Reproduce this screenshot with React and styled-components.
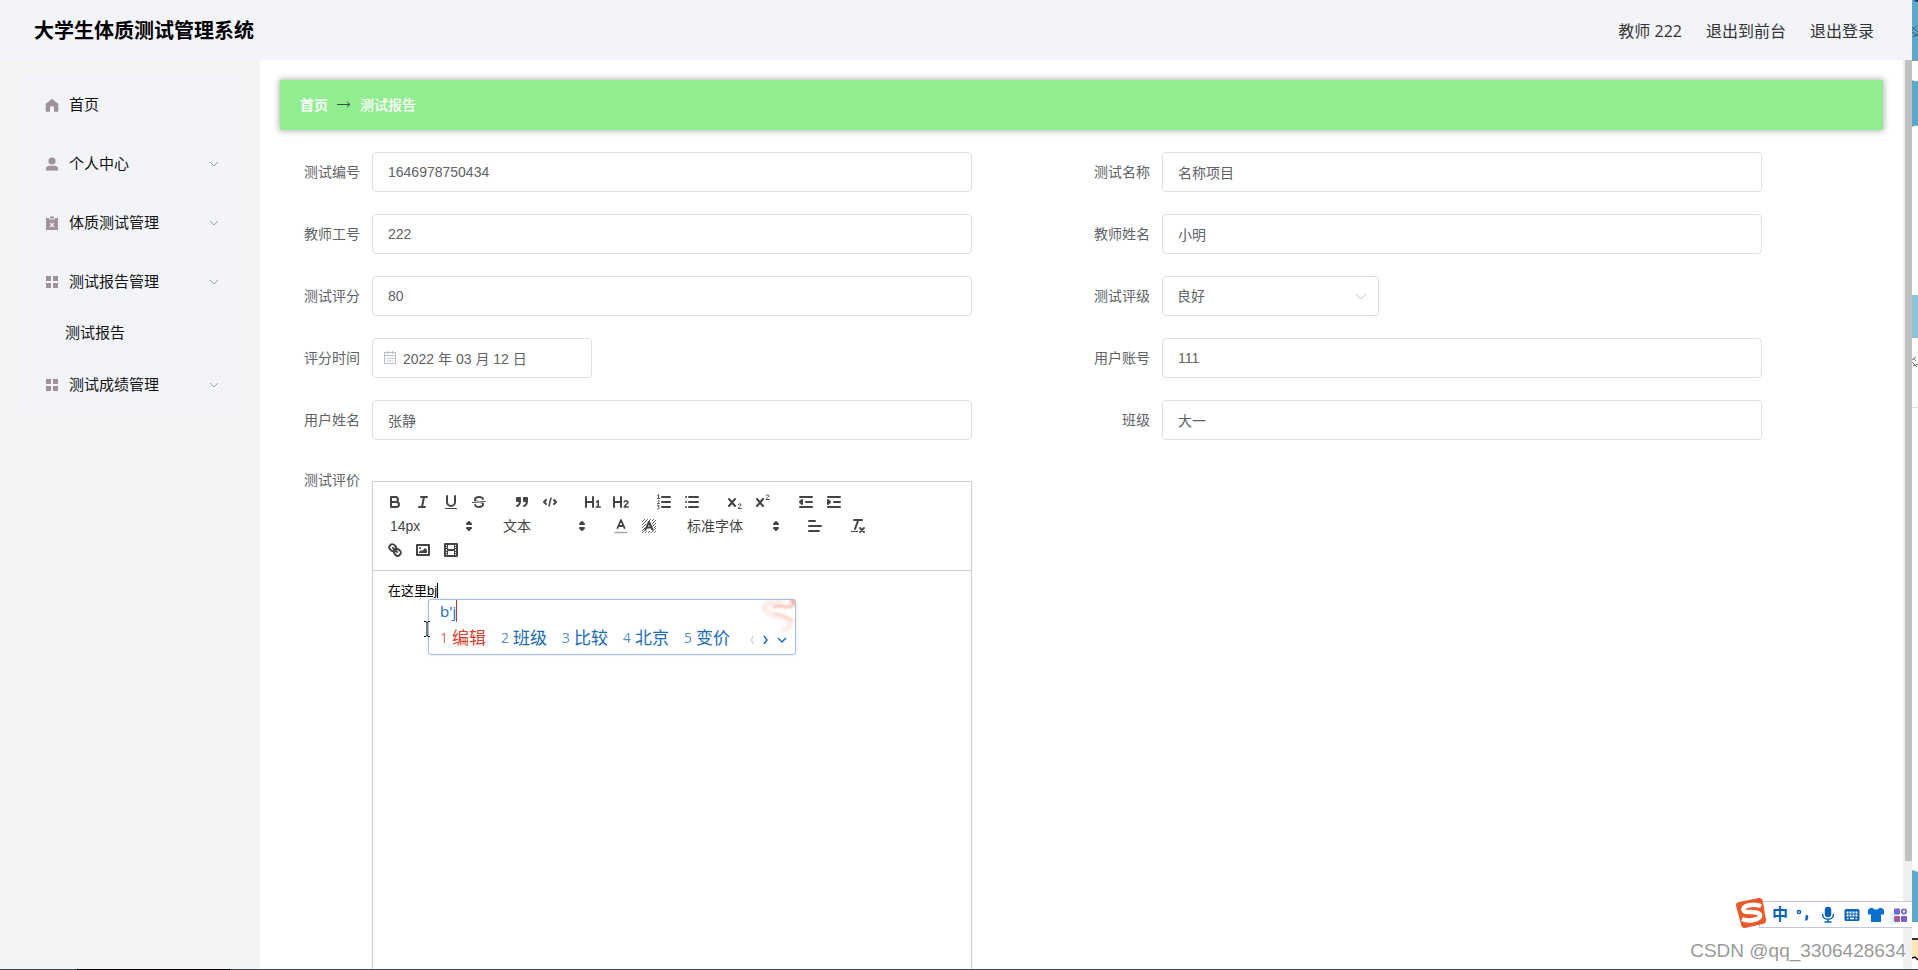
import React, { useState } from "react";
import styled, { createGlobalStyle, css } from "styled-components";

const GlobalStyle = createGlobalStyle`
  * {
    box-sizing: border-box;
  }

  body {
    margin: 0;
    overflow: hidden;
    background: #fff;
    font-family: "Liberation Sans", "Noto Sans CJK SC", sans-serif;
    font-size: 14px;
    color: #606266;
  }

  button, input, select {
    font-family: inherit;
  }
`;

const Page = styled.div`
  position: relative;
  display: flex;
  height: 100vh;
  overflow: hidden;
`;

const Window = styled.div`
  flex: 1;
  min-width: 0;
  display: flex;
  flex-direction: column;
`;

const Header = styled.header`
  display: flex;
  align-items: center;
  justify-content: space-between;
  flex: none;
  height: 60px;
  padding: 2px 38px 0 34px;
  background: #f2f4f9;
`;

const Title = styled.h1`
  margin: 0;
  font-size: 20px;
  font-weight: 700;
  line-height: 30px;
  color: #000;
`;

const UserNav = styled.nav`
  display: flex;
  gap: 24px;
  font-family: "Open Sans", "Noto Sans CJK SC", sans-serif;
  font-size: 16px;
  line-height: 24px;
  color: #333;
`;

const NavLink = styled.a`
  color: inherit;
  text-decoration: none;
`;

const Body = styled.div`
  flex: 1;
  display: flex;
  min-height: 0;
`;

const Sidebar = styled.aside`
  flex: none;
  width: 260px;
  padding: 15px 20px;
  background: #f3f3f3;
`;

const Menu = styled.nav`
  display: flex;
  flex-direction: column;
  background: #f2f4f9;
`;

const MenuItem = styled.button`
  display: flex;
  align-items: center;
  gap: 10px;
  height: 59px;
  padding: 0 21px 0 25px;
  border: none;
  background: none;
  font-size: 15px;
  line-height: 22px;
  color: #111;
  cursor: pointer;

  span {
    flex: 1;
    text-align: left;
  }
`;

const SubItem = styled.a`
  height: 44px;
  padding-left: 45px;
  font-size: 15px;
  line-height: 44px;
  color: #111;
  text-decoration: none;
`;

const Main = styled.main`
  flex: 1;
  min-width: 0;
  padding: 20px;
  overflow: hidden;
  background: #fff;
`;

const Breadcrumb = styled.nav`
  display: flex;
  align-items: center;
  gap: 9px;
  height: 50px;
  padding: 0 20px;
  border-radius: 1px;
  background: #90ee90;
  box-shadow: 0 0 6px 1px rgba(0, 0, 0, 0.3);
  color: #fff;
  line-height: 20px;
`;

const Crumb = styled.a`
  color: #fff;
  font-weight: ${(props) => (props.$strong ? 700 : 500)};
  text-decoration: none;
`;

const Form = styled.form`
  padding: 22px 11px 0 12px;
`;

const Fields = styled.div`
  display: grid;
  grid-template-columns: 1fr 1fr;
  row-gap: 22px;
`;

const Field = styled.div`
  display: flex;
  gap: 12px;
  padding-right: 110px;
`;

const Label = styled.label`
  flex: none;
  width: 68px;
  line-height: 40px;
  text-align: right;
`;

const control = css`
  width: 100%;
  height: 40px;
  padding: 0 15px;
  border: 1px solid #dcdfe6;
  border-radius: 4px;
  background: #fff;
  font-size: 14px;
  color: #606266;
  outline: none;
`;

const Input = styled.input`
  ${control}
  padding-left: ${(props) => (props.$icon ? "30px" : "15px")};
`;

const Select = styled.select`
  ${control}
  padding-left: 14px;
  appearance: none;
`;

const ControlBox = styled.div`
  position: relative;
  width: ${(props) => props.$width};

  svg {
    position: absolute;
    top: 13px;
    ${(props) => (props.$side === "left" ? "left: 11px;" : "right: 11px;")}
    pointer-events: none;
  }
`;

const EditorField = styled.div`
  display: flex;
  gap: 12px;
  width: 50%;
  margin-top: 20px;
  padding-right: 110px;
`;

const Editor = styled.div`
  flex: 1;
  min-width: 0;
  margin-top: 21px;
  border: 1px solid #ccc;
`;

const Toolbar = styled.div`
  display: flex;
  flex-wrap: wrap;
  padding: 8px;
  border-bottom: 1px solid #ccc;
`;

const Formats = styled.div`
  display: flex;
  margin-right: 15px;
`;

const ToolButton = styled.button`
  width: 28px;
  height: 24px;
  padding: 3px 5px;
  border: none;
  background: none;
  cursor: pointer;

  svg {
    display: block;
  }
`;

const Picker = styled.div`
  position: relative;
  width: ${(props) => props.$width};
  height: 24px;

  select {
    width: 100%;
    height: 24px;
    padding: 0 18px 0 9px;
    border: none;
    appearance: none;
    background: none;
    font-size: 14px;
    color: #444;
    outline: none;
  }

  svg {
    position: absolute;
    top: 3px;
    right: 1px;
    pointer-events: none;
  }
`;

const EditorBody = styled.div`
  position: relative;
  height: 600px;
`;

const EditorText = styled.div`
  height: 100%;
  padding: 11px 15px;
  font-size: 13px;
  line-height: 18px;
  color: #000;
  outline: none;

  u {
    border-right: 1px solid #000;
  }
`;

const Candidates = styled.div`
  position: absolute;
  top: 28px;
  left: 55px;
  width: 368px;
  height: 56px;
  padding: 0 7px 0 11px;
  border: 1px solid #a9bfdf;
  border-radius: 3px;
  background: #fff;
  box-shadow: 0 0 2px rgba(120, 150, 200, 0.4);
  font-family: "Open Sans", "Noto Sans CJK SC", sans-serif;
  color: #1a6bb5;
`;

const Typed = styled.div`
  width: max-content;
  border-right: 1px solid #c33;
  font-size: 15px;
  line-height: 22px;
`;

const CandidateRow = styled.div`
  position: relative;
  display: flex;
  align-items: center;
  height: 32px;
`;

const Candidate = styled.div`
  display: flex;
  align-items: center;
  gap: 4px;
  width: 61px;
  font-size: 17px;
  line-height: 24px;
  color: ${(props) => (props.$active ? "#d8402a" : "#1a6bb5")};

  small {
    width: 8px;
    font-size: 14px;
    opacity: 0.75;
  }
`;

const Swirl = styled.svg`
  position: absolute;
  top: 0;
  right: 0;
`;

const IBeam = styled.svg`
  position: absolute;
  top: 49px;
  left: 50px;
`;

const ScrollTrack = styled.div`
  flex: none;
  width: 9px;
  padding-left: 2px;
  background: #f0f0f0;
`;

const ScrollThumb = styled.div`
  height: 88%;
  background: #c1c1c1;
`;

const Behind = styled.div`
  flex: none;
  width: 6px;
  overflow: hidden;

  svg {
    display: block;
  }
`;

const ImeBar = styled.div`
  position: absolute;
  right: 6px;
  bottom: 42px;
  display: flex;
  align-items: center;
  gap: 4px;
  height: 27px;
  padding: 0 2px 0 10px;
  border: 1px solid #c3c5dc;
  border-right: none;
  background: #fff;
`;

const ImeButton = styled.button`
  width: 20px;
  height: 20px;
  padding: 0;
  border: none;
  background: none;
  font-size: 16px;
  font-weight: 700;
  line-height: 20px;
  color: #0a62b8;

  svg {
    display: block;
  }
`;

const ImeLogo = styled.svg`
  position: absolute;
  left: -25px;
  top: -5px;
`;

const Watermark = styled.div`
  position: absolute;
  right: 12px;
  bottom: 8px;
  font-size: 19px;
  line-height: 22px;
  color: #999;
  text-shadow: 1px 1px 0 #fff;
`;

const Taskbar = styled.div`
  position: absolute;
  left: 0;
  right: 0;
  bottom: 0;
  height: 1px;
  background: linear-gradient(to right, #3d4a52 4%, #000 4%, #000 12%, #3d4a52 12%);
`;

const SideIcon = ({ children }) => (
  <svg width="14" height="14" viewBox="0 0 14 14" fill="#9f9299">
    {children}
  </svg>
);

const HomeIcon = () => (
  <SideIcon>
    <path d="M7 .8 13.300 6v7.200a.6.6 0 0 1-.6.6H9V10a2 2 0 0 0-4 0v3.800H1.300a.6.6 0 0 1-.6-.6V6Z" />
  </SideIcon>
);

const UserIcon = () => (
  <SideIcon>
    <circle cx="7" cy="4" r="3.6" />
    <path d="M1 13.500V12c0-2 1.500-3.200 3.500-3.200h5c2 0 3.500 1.200 3.500 3.200v1.500Z" />
  </SideIcon>
);

const ClipboardIcon = () => (
  <SideIcon>
    <path d="M1 2h3v1.500h6V2h3v12H1Z" />
    <path d="M5 .5h4v2H5Z" />
    <path d="m5 6.800 4 4.200M9 6.800 5 11" stroke="#f2f4f9" strokeWidth="1.200" />
  </SideIcon>
);

const GridIcon = () => (
  <SideIcon>
    <path d="M1 1h5v5H1ZM8 1h5v5H8ZM1 8h5v5H1ZM8 8h5v5H8Z" />
  </SideIcon>
);

const Chevron = ({ size = 10, color = "#909399" }) => (
  <svg width={size} height={size} viewBox="0 0 10 10" fill="none" stroke={color} strokeWidth="0.9">
    <path d="m1 3 4 4 4-4" />
  </svg>
);

const SelectArrow = () => (
  <svg width="14" height="14" viewBox="0 0 14 14" fill="none" stroke="#c0c4cc">
    <path d="m2 5 5 5 5-5" />
  </svg>
);

const CalendarIcon = () => (
  <svg width="14" height="14" viewBox="0 0 14 14" fill="none" stroke="#b9bdc5">
    <path d="M1.500 1.500h11v11h-11ZM1.500 4.500h11M4.500 0v3M9.500 0v3M3.500 7.500h2M6 7.500h2M8.500 7.500h2M3.500 10h2M6 10h2M8.500 10h2" />
  </svg>
);

const QIcon = ({ children }) => (
  <svg
    width="18"
    height="18"
    viewBox="0 0 18 18"
    fill="none"
    stroke="#444"
    strokeWidth="2"
    strokeLinecap="round"
    strokeLinejoin="round"
  >
    {children}
  </svg>
);

const FILL = { fill: "#444", stroke: "none" };

const icons = {
  bold: <path d="M5 4h4.500a2.500 2.500 0 0 1 0 5H5ZM5 9h5.500a2.500 2.500 0 0 1 0 5H5Z" />,
  italic: <path d="M7 4h6M5 14h6M8 14l2-10" />,
  underline: (
    <>
      <path d="M5 3v6a4 4 0 0 0 8 0V3" />
      <rect x="3" y="15" width="12" height="1" {...FILL} />
    </>
  ),
  strike: (
    <>
      <path d="M15.500 8.500l-13 1" strokeWidth="1" />
      <path
        {...FILL}
        d="M9.007,8C6.542,7.791,6,7.519,6,6.500,6,5.792,7.283,5,9,5c1.571,0,2.765.679,2.969,1.309a1,1,0,0,0,1.900-.617C13.356,4.106,11.354,3,9,3,6.200,3,4,4.538,4,6.500a3.200,3.200,0,0,0,.5,1.843Z"
      />
      <path
        {...FILL}
        d="M8.984,10C11.457,10.208,12,10.479,12,11.500c0,0.708-1.283,1.500-3,1.500-1.571,0-2.765-.679-2.969-1.309a1,1,0,1,0-1.900.617C4.644,13.894,6.646,15,9,15c2.800,0,5-1.538,5-3.500a3.200,3.200,0,0,0-.5-1.843Z"
      />
    </>
  ),
  quote: (
    <>
      <path fill="#444" d="M4 5h3v3H4ZM11 5h3v3h-3Z" />
      <path d="M7 8c0 4-3 5-3 5M14 8c0 4-3 5-3 5" />
    </>
  ),
  code: (
    <>
      <path d="M5 7 3 9l2 2M13 7l2 2-2 2" />
      <path d="M10 5 8 13" strokeWidth="1.500" />
    </>
  ),
  h1: (
    <>
      <path d="M2 4v10M9 4v10M2 9h7" />
      <path d="m12.500 8.800 1.700-1.100V14M12.300 14h4" strokeWidth="1.600" />
    </>
  ),
  h2: (
    <>
      <path d="M2 4v10M9 4v10M2 9h7" />
      <path d="M12.300 8.800c.3-1.500 3.700-1.500 3.700.4 0 1.800-3.500 2.600-3.700 4.800h4" strokeWidth="1.600" />
    </>
  ),
  ordered: (
    <>
      <path d="M7 4h8M7 9h8M7 14h8" />
      <path
        strokeWidth="0.9"
        d="m2.500 2.500 1-.9v3.500M2.500 5.500h2M2.500 8c.6-1 2-.4 1.700.6-.2.900-1.700 1.200-1.700 2.100h2M2.500 12.700h1.700l-.9 1.300c1.500 0 1.500 2.200-.8 2"
      />
    </>
  ),
  bullet: <path d="M6 4h9M6 9h9M6 14h9M3 4h0M3 9h0M3 14h0" />,
  sub: (
    <>
      <path d="m3 6 6 7M9 6l-6 7" />
      <path strokeWidth="1" d="M12.300 11.700c.3-1.400 2.700-1.200 2.600.3-.1 1.300-2.600 2-2.700 3.500h3" />
    </>
  ),
  sup: (
    <>
      <path d="m3 6 6 7M9 6l-6 7" />
      <path strokeWidth="1" d="M12.300 2.700c.3-1.400 2.700-1.200 2.600.3-.1 1.300-2.600 2-2.700 3.500h3" />
    </>
  ),
  outdent: <path fill="#444" d="M3 14h12M3 4h12M9 9h6M5 7v4L3 9Z" />,
  indent: <path fill="#444" d="M3 14h12M3 4h12M9 9h6M3 7v4l2-2Z" />,
  color: (
    <>
      <path d="M3 15.500h12" stroke="#aaa" strokeWidth="1.500" />
      <path d="M5.500 11 9 3l3.500 8M6.400 9h5.200" strokeWidth="1.800" />
    </>
  ),
  background: (
    <>
      <path
        strokeWidth="0.8"
        strokeLinecap="butt"
        d="M2 5l3-3M2 8l6-6M2 11l4-4M9 4l2-2M2 14l3-3M12 4l2-2M2 16l3-3M12 7l4-4M5 16l2-2M13 9l3-3M8 16l2-2M14 11l2-2M11 16l5-5M14 16l2-2"
      />
      <path d="M5.500 12.500 9 5l3.500 7.500M6.400 10.500h5.200" />
    </>
  ),
  align: <path d="M3 9h12M3 14h10M3 4h6" />,
  clean: (
    <>
      <path d="M5 3h8M6 12l3.300-9" />
      <path d="m11 11 4 4M15 11l-4 4" strokeWidth="1.800" />
      <rect x="2" y="14" width="7" height="1" {...FILL} />
    </>
  ),
  link: (
    <>
      <path d="m7 7 4 4" />
      <path d="M8.900,4.577a3.476,3.476,0,0,1,.36,4.679A3.476,3.476,0,0,1,4.577,8.900C3.185,7.500,2.035,6.400,4.217,4.217S7.500,3.185,8.900,4.577Z" />
      <path d="M13.423,9.100a3.476,3.476,0,0,0-4.679-.36,3.476,3.476,0,0,0,.36,4.679c1.392,1.392,2.500,2.542,4.679.36S14.815,10.500,13.423,9.100Z" />
    </>
  ),
  image: (
    <>
      <rect x="3" y="4" width="12" height="10" />
      <circle cx="6" cy="7" r="1" {...FILL} />
      <path {...FILL} d="M5 12v-1l2-2 1 1 3-3 2 2v3Z" />
    </>
  ),
  video: (
    <>
      <rect x="3" y="3" width="12" height="12" />
      <path {...FILL} d="M5 3h1v12H5ZM12 3h1v12h-1ZM5 8h8v2H5ZM3 5h3v1H3ZM3 7h3v1H3ZM3 10h3v1H3ZM3 12h3v1H3ZM12 5h3v1h-3ZM12 7h3v1h-3ZM12 10h3v1h-3ZM12 12h3v1h-3Z" />
    </>
  ),
};

const Tool = ({ name }) => (
  <ToolButton type="button" aria-label={name}>
    <QIcon>{icons[name]}</QIcon>
  </ToolButton>
);

const ToolPicker = ({ name, value, width }) => (
  <Picker $width={width}>
    <select aria-label={name} defaultValue={value}>
      <option>{value}</option>
    </select>
    <QIcon>
      <path fill="#444" d="m7 11 2 2 2-2ZM7 7l2-2 2 2Z" />
    </QIcon>
  </Picker>
);

const menuItems = [
  { label: "首页", icon: <HomeIcon /> },
  { label: "个人中心", icon: <UserIcon />, children: [] },
  { label: "体质测试管理", icon: <ClipboardIcon />, children: [] },
  { label: "测试报告管理", icon: <GridIcon />, children: ["测试报告"] },
  { label: "测试成绩管理", icon: <GridIcon />, children: [] },
];

const fields = [
  { name: "ceshibianhao", label: "测试编号" },
  { name: "ceshimingcheng", label: "测试名称" },
  { name: "jiaoshigonghao", label: "教师工号" },
  { name: "jiaoshixingming", label: "教师姓名" },
  { name: "ceshipingfen", label: "测试评分" },
  { name: "ceshipingji", label: "测试评级", type: "select", options: ["良好"] },
  { name: "pingfenshijian", label: "评分时间", type: "date" },
  { name: "yonghuzhanghao", label: "用户账号" },
  { name: "yonghuxingming", label: "用户姓名" },
  { name: "banji", label: "班级" },
];

const candidates = ["编辑", "班级", "比较", "北京", "变价"];

function FieldControl({ field, value, onChange }) {
  if (field.type === "select") {
    return (
      <ControlBox $width="217px">
        <Select id={field.name} name={field.name} value={value} onChange={onChange}>
          {field.options.map((option) => (
            <option key={option}>{option}</option>
          ))}
        </Select>
        <SelectArrow />
      </ControlBox>
    );
  }
  if (field.type === "date") {
    return (
      <ControlBox $width="220px" $side="left">
        <Input $icon id={field.name} name={field.name} value={value} onChange={onChange} />
        <CalendarIcon />
      </ControlBox>
    );
  }
  return <Input id={field.name} name={field.name} value={value} onChange={onChange} />;
}

function RichEditor() {
  return (
    <Editor>
      <Toolbar>
        <Formats>
          <Tool name="bold" />
          <Tool name="italic" />
          <Tool name="underline" />
          <Tool name="strike" />
        </Formats>
        <Formats>
          <Tool name="quote" />
          <Tool name="code" />
        </Formats>
        <Formats>
          <Tool name="h1" />
          <Tool name="h2" />
        </Formats>
        <Formats>
          <Tool name="ordered" />
          <Tool name="bullet" />
        </Formats>
        <Formats>
          <Tool name="sub" />
          <Tool name="sup" />
        </Formats>
        <Formats>
          <Tool name="outdent" />
          <Tool name="indent" />
        </Formats>
        <Formats>
          <ToolPicker name="size" value="14px" width="98px" />
        </Formats>
        <Formats>
          <ToolPicker name="header" value="文本" width="98px" />
        </Formats>
        <Formats>
          <Tool name="color" />
          <Tool name="background" />
        </Formats>
        <Formats>
          <ToolPicker name="font" value="标准字体" width="108px" />
        </Formats>
        <Formats>
          <Tool name="align" />
        </Formats>
        <Formats>
          <Tool name="clean" />
        </Formats>
        <Formats>
          <Tool name="link" />
          <Tool name="image" />
          <Tool name="video" />
        </Formats>
      </Toolbar>
      <EditorBody>
        <EditorText
          role="textbox"
          aria-labelledby="pingjia-label"
          contentEditable
          suppressContentEditableWarning
          spellCheck={false}
        >
          在这里<u>bj</u>
        </EditorText>
        <Candidates>
          <Swirl width="38" height="32" viewBox="0 0 38 32" fill="none">
            <defs>
              <filter id="soft">
                <feGaussianBlur stdDeviation="1.2" />
              </filter>
            </defs>
            <g filter="url(#soft)">
              <path d="M26 3C14 0 4 5 9 11s20 4 24 10-4 8-8 9" stroke="#fdeeea" strokeWidth="6" />
              <path d="M16 7c6-2 12 1 20-1" stroke="#f9c4b8" strokeWidth="3" />
              <path d="M18 14c7 1 13 3 18 7" stroke="#fbd5cc" strokeWidth="3" />
              <path d="M31 0h7v8q-2-5-7-8Z" fill="#f2a08f" />
            </g>
          </Swirl>
          <Typed>b'j</Typed>
          <CandidateRow>
            {candidates.map((word, index) => (
              <Candidate key={word} $active={index === 0}>
                <small>{index + 1}</small>
                {word}
              </Candidate>
            ))}
            <svg width="42" height="12" viewBox="0 0 42 12" fill="none" stroke="#1a6bb5" strokeWidth="1.500">
              <path d="M9 4 6 8l3 4" stroke="#d5dbe4" />
              <path d="m19 4 3 4-3 4" />
              <path d="m33 6 4 4 4-4" />
            </svg>
          </CandidateRow>
        </Candidates>
        <IBeam width="8" height="18" viewBox="0 0 8 18" fill="none" stroke="#000">
          <path d="M1 1.500h2l1 1 1-1h2M4 2v14M1 16.500h2l1-1 1 1h2" />
        </IBeam>
      </EditorBody>
    </Editor>
  );
}

function InputMethodBar() {
  return (
    <ImeBar>
      <ImeLogo width="32" height="32" viewBox="0 0 32 32">
        <path d="M4 5 24 1q3-.3 3.700 2.500L31 23q.3 3-2.500 3.700L10 31q-3 .3-3.700-2.500L1 8.500Q.8 5.600 4 5Z" fill="#e95a2b" />
        <path
          d="M26 9C18 6 7.500 8.500 8.500 13c1 4 15 0 16.500 5 1 5-12 7-18 4"
          fill="none"
          stroke="#fff"
          strokeWidth="4.500"
        />
      </ImeLogo>
      <ImeButton type="button">中</ImeButton>
      <ImeButton type="button" aria-label="标点">
        <svg width="20" height="20" viewBox="0 0 20 20" fill="none" stroke="#0a62b8">
          <circle cx="5" cy="7" r="1.600" strokeWidth="1.500" />
          <path d="M11.500 11.500H13c.3 2-.5 3-1.700 3.500" strokeWidth="2.400" />
        </svg>
      </ImeButton>
      <ImeButton type="button" aria-label="语音">
        <svg width="20" height="20" viewBox="0 0 20 20" fill="none" stroke="#0a62b8" strokeWidth="1.500">
          <rect x="7.500" y="2.500" width="5" height="9" rx="2.500" fill="#0a62b8" />
          <path d="M4.500 9c0 7 11 7 11 0M10 14v3M6.500 17h7" />
        </svg>
      </ImeButton>
      <ImeButton type="button" aria-label="键盘">
        <svg width="20" height="20" viewBox="0 0 20 20">
          <rect x="2.500" y="4" width="15" height="12" rx="1.500" fill="#0a62b8" />
          <path
            d="M4.500 7.500h11M4.500 10.500h11"
            stroke="#fff"
            strokeWidth="1.800"
            strokeDasharray="2 1"
          />
          <path d="M5 13.500h1.500M8 13.500h4M13.500 13.500H15" stroke="#fff" strokeWidth="1.500" />
        </svg>
      </ImeButton>
      <ImeButton type="button" aria-label="皮肤">
        <svg width="20" height="20" viewBox="0 0 20 20" fill="#0a6fd0">
          <path d="M7 3c1 2 5 2 6 0h3l2 2v4.500h-3V17H5V9.500H2V5l2-2Z" />
        </svg>
      </ImeButton>
      <ImeButton type="button" aria-label="工具箱">
        <svg width="20" height="20" viewBox="0 0 20 20">
          <rect x="0" y="7" width="9" height="12" fill="#dff6f3" />
          <rect x="4" y="3.500" width="6" height="6" rx="1" fill="#6f68e0" />
          <rect x="4" y="11" width="6" height="6" rx="1" fill="#a65a9c" />
          <rect x="11" y="11" width="6" height="6" rx="1" fill="#7a5fd0" />
          <circle cx="14" cy="6.500" r="2.200" fill="none" stroke="#6f68e0" strokeWidth="1.800" />
        </svg>
      </ImeButton>
    </ImeBar>
  );
}

function App() {
  const [report, setReport] = useState({
    ceshibianhao: "1646978750434",
    ceshimingcheng: "名称项目",
    jiaoshigonghao: "222",
    jiaoshixingming: "小明",
    ceshipingfen: "80",
    ceshipingji: "良好",
    pingfenshijian: "2022 年 03 月 12 日",
    yonghuzhanghao: "111",
    yonghuxingming: "张静",
    banji: "大一",
  });

  const handleChange = (event) => {
    const { name, value } = event.target;
    setReport((prev) => ({ ...prev, [name]: value }));
  };

  return (
    <Page>
      <GlobalStyle />
      <Window>
        <Header>
          <Title>大学生体质测试管理系统</Title>
          <UserNav>
            <span>教师 222</span>
            <NavLink href="#front">退出到前台</NavLink>
            <NavLink href="#logout">退出登录</NavLink>
          </UserNav>
        </Header>
        <Body>
          <Sidebar>
            <Menu>
              {menuItems.map((item) => (
                <React.Fragment key={item.label}>
                  <MenuItem type="button">
                    {item.icon}
                    <span>{item.label}</span>
                    {item.children && <Chevron />}
                  </MenuItem>
                  {item.children?.map((child) => (
                    <SubItem key={child} href="#report">
                      {child}
                    </SubItem>
                  ))}
                </React.Fragment>
              ))}
            </Menu>
          </Sidebar>
          <Main>
            <Breadcrumb>
              <Crumb href="#home" $strong>
                首页
              </Crumb>
              <svg width="14" height="8" viewBox="0 0 14 8" fill="none" stroke="#33523a">
                <path d="M0 3.500h13M10 1l3 2.500L10 6" />
              </svg>
              <Crumb href="#report">测试报告</Crumb>
            </Breadcrumb>
            <Form>
              <Fields>
                {fields.map((field) => (
                  <Field key={field.name}>
                    <Label htmlFor={field.name}>{field.label}</Label>
                    <FieldControl field={field} value={report[field.name]} onChange={handleChange} />
                  </Field>
                ))}
              </Fields>
              <EditorField>
                <Label as="div" id="pingjia-label">
                  测试评价
                </Label>
                <RichEditor />
              </EditorField>
            </Form>
          </Main>
          <ScrollTrack>
            <ScrollThumb />
          </ScrollTrack>
        </Body>
      </Window>
      <Behind>
        <svg width="6" height="970" viewBox="0 0 6 970">
          <path d="M0 0h6v60H0Z" fill="#5ba8cb" />
          <path d="M2 0h4v2q-3 0-4-2Z" fill="#12307a" />
          <path d="m0 30 5-4M0 27l6 5M0 32l6 4M1 37l5-3" stroke="#3a5f78" fill="none" />
          <path d="M0 60h6v1H0Z" fill="#999" />
          <path d="M0 80q3 2 6 1v45q-3-1-6 1Z" fill="#5ba8cb" />
          <path d="M0 295h6v43H0Z" fill="#8cc2da" />
          <path d="m0 360 4-3M1 358l3 3M0 362l5 5M1 366l5-2" stroke="#777" fill="none" />
          <path d="M0 407h6v1H0Z" fill="#ddd" />
          <path d="M0 870 6 872v50H0Z" fill="#5ba8cb" />
          <path d="M0 938h6v2H0Z" fill="#333" />
          <path d="M0 940h6v18H0Z" fill="#fbe7b8" />
          <path d="m0 958 3-1 3 3" stroke="#000" strokeWidth="1.500" fill="none" />
        </svg>
      </Behind>
      <InputMethodBar />
      <Watermark>CSDN @qq_3306428634</Watermark>
      <Taskbar />
    </Page>
  );
}

export default App;
